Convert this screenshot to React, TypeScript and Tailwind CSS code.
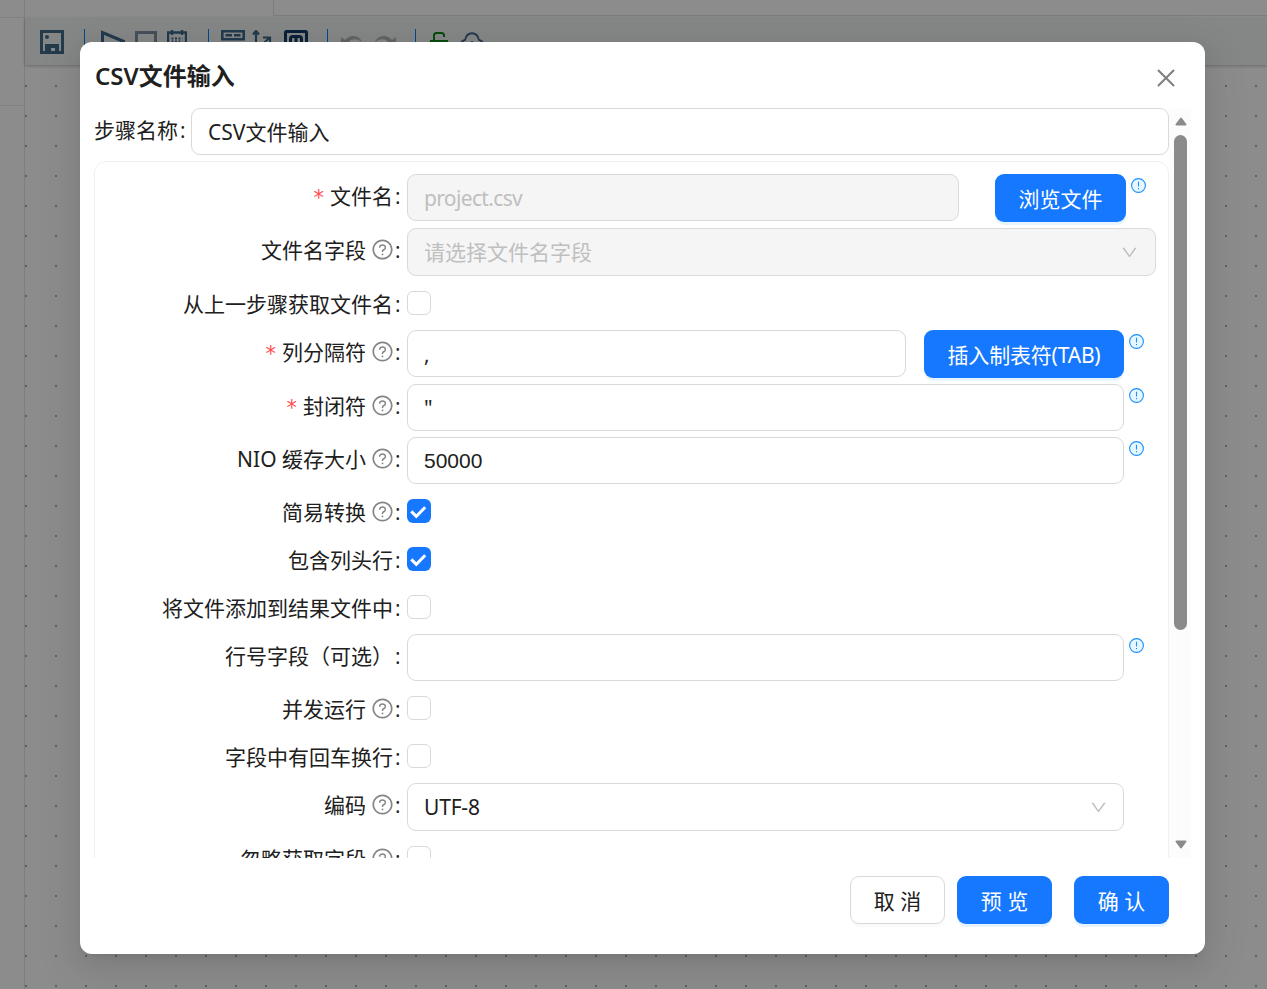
import type { ReactNode } from 'react';
import { AiOutlineClose, AiOutlineDown, AiOutlineQuestionCircle } from 'react-icons/ai';

const inputBase = 'flex h-[47px] items-center rounded-[9px] border border-[#d9d9d9] px-4';

function InfoIcon() {
  return (
    <svg className="ml-[5px] mt-1 size-[15px] shrink-0" viewBox="0 0 15 15">
      <circle cx="7.5" cy="7.5" r="6.9" fill="#e6f7ff" stroke="#1890ff" strokeWidth="1.1" />
      <path d="M7.5 3.8v4.8M7.5 10v1.3" stroke="#1890ff" strokeWidth="1.1" />
    </svg>
  );
}

function Checkbox({ checked = false }: { checked?: boolean }) {
  if (!checked) {
    return <span className="mt-3 size-6 rounded-md border border-[#d9d9d9] bg-white" />;
  }
  return (
    <span className="mt-3 size-6 rounded-md bg-[#1677ff]">
      <svg viewBox="0 0 24 24" className="size-6" fill="none">
        <path d="M4.300 12.400l5 4.900 8.900-9" stroke="#fff" strokeWidth="3" />
      </svg>
    </span>
  );
}

interface RowProps {
  label: string;
  height: string;
  required?: boolean;
  help?: boolean;
  children: ReactNode;
}

function Row({ label, height, required, help, children }: RowProps) {
  return (
    <div className={`flex shrink-0 ${height}`}>
      <div className="flex h-12 w-[312px] shrink-0 items-center justify-end whitespace-nowrap">
        {required && <span className="mr-[6px] pt-[6px] font-['DejaVu_Sans'] text-[21px] text-[#ff4d4f]">*</span>}
        <span className="pt-[2px] tracking-[-0.01em]">
          <span className="tracking-normal">{label}</span>
        </span>
        {help && <AiOutlineQuestionCircle className="-mr-px ml-[5px] size-[23px] text-[#858585]" />}
        <span className="w-[14px] pl-[2px] pt-[2px] font-['Open_Sans']">:</span>
      </div>
      {children}
    </div>
  );
}

function PrimaryButton({ className, children }: { className: string; children: ReactNode }) {
  return (
    <button
      className={`flex h-12 shrink-0 items-center justify-center rounded-[9px] bg-[#1677ff] pt-[2px] text-white shadow-[0_3px_0_rgba(5,145,255,0.1)] ${className}`}
    >
      {children}
    </button>
  );
}

function ToolDivider({ className }: { className: string }) {
  return <span className={`mt-[11px] h-6 w-px bg-[#0084ff] ${className}`} />;
}

function Toolbar() {
  return (
    <div className="flex h-[47px] items-start bg-[#f0f6f4] shadow-[0_1px_3px_rgba(0,0,0,0.25)]">
      <svg className="ml-[15px] mt-3 size-6" viewBox="0 0 24 24" fill="none">
        <path d="M1.5 1.5h21v21h-21z" stroke="#436c8b" strokeWidth="3" />
        <path d="M5 14h14v10h-4v-6h-4v6H5z" fill="#436c8b" />
        <circle cx="7" cy="7" r="2" fill="#436c8b" />
      </svg>
      <ToolDivider className="ml-5" />
      <svg className="ml-4 mt-3 size-6" viewBox="0 0 24 24" fill="none">
        <path d="M1.500 2.500v20L24 12z" stroke="#3f6a8c" strokeWidth="3" />
      </svg>
      <svg className="ml-[10px] mt-3 size-[22px]" viewBox="0 0 22 22" fill="none">
        <path d="M1.500 2.500h19v18h-19z" stroke="#7e93a4" strokeWidth="3" />
      </svg>
      <svg className="ml-[10px] mt-3 h-6 w-5" viewBox="0 0 20 24" fill="none">
        <path d="M1 2.500h18V22H1zM5 0v5M15 0v5" stroke="#3f6a8c" strokeWidth="2.400" />
        <path d="M4.500 8.500h11M4.500 11.500h11" stroke="#3f6a8c" strokeWidth="2" strokeDasharray="2 1.500" />
      </svg>
      <ToolDivider className="ml-[21px]" />
      <svg className="ml-3 mt-3 size-6" viewBox="0 0 24 24" fill="none">
        <path d="M1.300 1.300h21.400v8H1.300z" stroke="#3f6a8c" strokeWidth="2.600" />
        <path d="M4.500 5.300h15" stroke="#3f6a8c" strokeWidth="2.500" strokeDasharray="6.500 2" />
      </svg>
      <svg className="ml-[7px] mt-3 size-5" viewBox="0 0 20 20" fill="none">
        <path d="M4 20V2M1 4.500L4 1l3 3.500M6 19L17 8M11 7.500h7v6" stroke="#3f6a8c" strokeWidth="2.200" />
      </svg>
      <svg className="ml-3 mt-3 size-6" viewBox="0 0 24 24" fill="none">
        <rect x="1.500" y="1.500" width="21" height="21" rx="1" stroke="#123f69" strokeWidth="3" />
        <path d="M6.500 20V9q0-2.500 2.500-2.500h6q2.500 0 2.500 2.500v11M12 7v13" stroke="#123f69" strokeWidth="3" />
      </svg>
      <ToolDivider className="ml-[19px]" />
      <svg className="ml-[13px] mt-[17px] h-5 w-[22px]" viewBox="0 0 22 20">
        <path d="M0 2l4 3c5-6 14-5 17 2C15 3 10 4 8 7l3 2H0z" fill="#b4b4b4" />
      </svg>
      <svg className="ml-[11px] mt-[17px] h-5 w-[22px]" viewBox="0 0 22 20">
        <path d="M22 2l-4 3C13-1 4 0 1 7c6-4 11-3 13 0l-3 2h11z" fill="#b4b4b4" />
      </svg>
      <ToolDivider className="ml-[19px]" />
      <svg className="ml-[14px] mt-[14px] h-5 w-[18px]" viewBox="0 0 18 20" fill="none">
        <path d="M1 9h16v10H1zM4 9V3.500Q4 1 6.500 1h5Q14 1 14 3.500V5" stroke="#128a1c" strokeWidth="2" />
      </svg>
      <svg className="ml-[11px] mt-[14px] h-5 w-[26px]" viewBox="0 0 26 20" fill="none">
        <path d="M6 17C0 16 1 9 6 8 8-1 18-1 20 8c5 1 6 8 0 9M13 9v10" stroke="#49688e" strokeWidth="1.800" />
      </svg>
    </div>
  );
}

function Workspace() {
  return (
    <div className="flex h-full w-full bg-white">
      <div className="flex w-[25px] flex-col border-r border-[#e4e4e4]">
        <div className="h-[18px] border-b border-[#e9e9e9]" />
        <div className="h-[88px] border-b border-[#e9e9e9]" />
      </div>
      <div className="flex flex-1 flex-col">
        <div className="flex h-[18px]">
          <div className="h-4 w-[249px] border-r border-[#e4e4e4]" />
          <div className="h-4 flex-1 border-b border-[#e4e4e4]" />
        </div>
        <Toolbar />
        <div className="flex-1 bg-[radial-gradient(circle_at_1px_1px,#b0b0b0_0.8px,transparent_1.1px)] bg-[length:30px_30px] bg-[position:0_20px]" />
      </div>
    </div>
  );
}

export default function App() {
  return (
    <div className="relative h-[989px] w-[1267px] overflow-hidden font-['Noto_Sans','Noto_Sans_CJK_SC',sans-serif] text-[21px] leading-[33px] text-[#202020]">
      <Workspace />

      {/* Mask and dialog */}
      <div className="absolute inset-0 bg-black/45 pl-20 pt-[42px]">
        <div className="flex h-[912px] w-[1125px] flex-col rounded-xl bg-white shadow-[0_9px_24px_rgba(0,0,0,0.08),0_4px_9px_-6px_rgba(0,0,0,0.12),0_13px_42px_12px_rgba(0,0,0,0.05)]">
          <div className="flex h-[66px] shrink-0 items-center justify-between pl-[15px] pr-[26px]">
            <h2 className="pt-px text-[24px] font-semibold">CSV文件输入</h2>
            <AiOutlineClose className="mt-[6px] size-[26px] text-[#808080]" />
          </div>

          <div className="ml-[14px] flex h-[750px] w-[1097px] shrink-0">
            <div className="flex w-[1075px] flex-col overflow-hidden">
              <div className="flex shrink-0">
                <div className="flex w-[97px] whitespace-nowrap pt-[6px]">
                  步骤名称<span className="pl-[2px] font-['Open_Sans']">:</span>
                </div>
                <div className={`${inputBase} flex-1 pt-[2px]`}>CSV文件输入</div>
              </div>

              <div className="mt-[6px] flex h-[820px] shrink-0 flex-col rounded-xl border border-[#f0f0f0] pt-[9px]">
                <Row label="文件名" height="h-[54px]" required>
                  <div className={`${inputBase} mt-[3px] w-[552px] bg-[#f5f5f5] pt-[2px] tracking-[-0.65px] text-[#bfbfbf]`}>
                    project.csv
                  </div>
                  <PrimaryButton className="ml-9 mt-[3px] w-[131px]">浏览文件</PrimaryButton>
                  <div className="mt-[3px]"><InfoIcon /></div>
                </Row>
                <Row label="文件名字段" height="h-[54px]" help>
                  <div className="mt-[3px] flex h-12 w-[749px] items-center justify-between rounded-[9px] border border-[#d9d9d9] bg-[#f5f5f5] px-4 text-[#bfbfbf]">
                    请选择文件名字段
                    <AiOutlineDown className="size-[19px]" />
                  </div>
                </Row>
                <Row label="从上一步骤获取文件名" height="h-12">
                  <Checkbox />
                </Row>
                <Row label="列分隔符" height="h-[54px]" required help>
                  <div className={`${inputBase} mt-[3px] w-[499px] pt-[2px]`}>,</div>
                  <PrimaryButton className="ml-[18px] mt-[3px] w-[200px] tracking-[-0.2px]">插入制表符(TAB)</PrimaryButton>
                  <div className="mt-[3px]"><InfoIcon /></div>
                </Row>
                <Row label="封闭符" height="h-[53px]" required help>
                  <div className={`${inputBase} mt-[3px] w-[717px] pt-[2px]`}>"</div>
                  <div className="mt-[3px]"><InfoIcon /></div>
                </Row>
                <Row label="NIO 缓存大小" height="h-[53px]" help>
                  <div className={`${inputBase} mt-[3px] w-[717px] font-['Liberation_Sans']`}>50000</div>
                  <div className="mt-[3px]"><InfoIcon /></div>
                </Row>
                <Row label="简易转换" height="h-12" help>
                  <Checkbox checked />
                </Row>
                <Row label="包含列头行" height="h-12">
                  <Checkbox checked />
                </Row>
                <Row label="将文件添加到结果文件中" height="h-12">
                  <Checkbox />
                </Row>
                <Row label="行号字段（可选）" height="h-[53px]">
                  <div className={`${inputBase} mt-[3px] w-[717px]`} />
                  <div className="mt-[3px]"><InfoIcon /></div>
                </Row>
                <Row label="并发运行" height="h-12" help>
                  <Checkbox />
                </Row>
                <Row label="字段中有回车换行" height="h-12">
                  <Checkbox />
                </Row>
                <Row label="编码" height="h-[54px]" help>
                  <div className="mt-[3px] flex h-12 w-[717px] items-center justify-between rounded-[9px] border border-[#d9d9d9] pl-4 pr-[15px]">
                    <span className="pt-px tracking-[-0.2px]">UTF-8</span>
                    <AiOutlineDown className="size-[19px] text-[#bfbfbf]" />
                  </div>
                </Row>
                <Row label="忽略获取字段" height="h-12" help>
                  <Checkbox />
                </Row>
              </div>
            </div>

            {/* Scrollbar */}
            <div className="flex w-[22px] flex-col items-center bg-[#fcfcfc]">
              <svg className="mt-[9px] ml-px h-[9px] w-[12px]" viewBox="0 0 12 9">
                <path d="M6 1.500L10.500 7.500h-9z" fill="#8b8b8b" stroke="#8b8b8b" strokeWidth="2" strokeLinejoin="round" />
              </svg>
              <span className="mt-[9px] h-[495px] w-[13px] rounded-full bg-[#8b8b8b]" />
              <svg className="mt-[210px] ml-px h-[9px] w-[12px]" viewBox="0 0 12 9">
                <path d="M6 7.500L1.500 1.500h9z" fill="#8b8b8b" stroke="#8b8b8b" strokeWidth="2" strokeLinejoin="round" />
              </svg>
            </div>
          </div>

          <div className="flex pl-[770px] pt-[18px]">
            <button className="flex h-12 w-[95px] items-center justify-center rounded-[9px] border border-[#d9d9d9] pt-[2px] shadow-[0_3px_0_rgba(0,0,0,0.02)]">
              取 消
            </button>
            <PrimaryButton className="ml-3 w-[95px]">预 览</PrimaryButton>
            <PrimaryButton className="ml-[22px] w-[95px]">确 认</PrimaryButton>
          </div>
        </div>
      </div>
    </div>
  );
}
